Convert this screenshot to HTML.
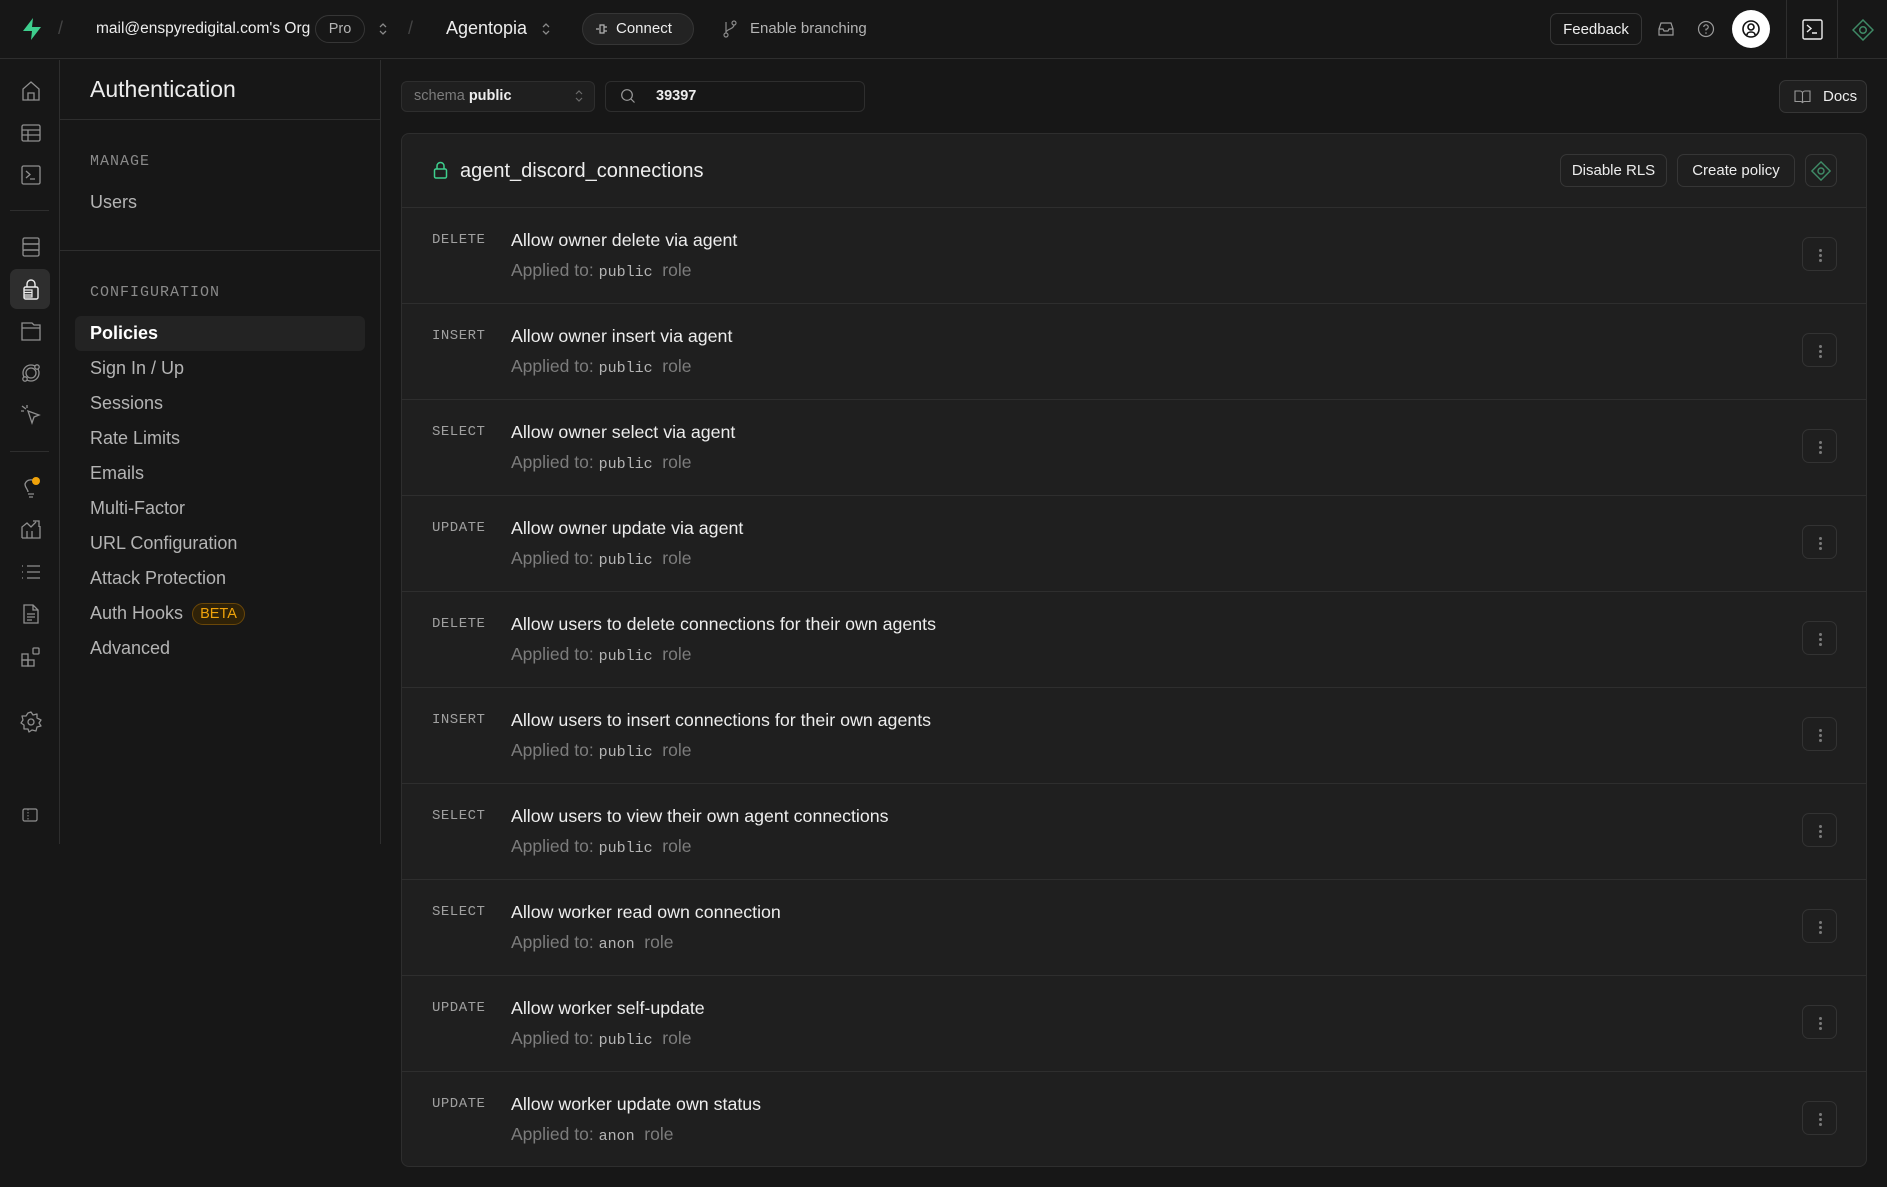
<!DOCTYPE html>
<html><head><meta charset="utf-8"><style>
*{margin:0;padding:0;box-sizing:border-box}
body{width:1887px;height:1187px;background:#171717;font-family:"Liberation Sans",sans-serif;color:#ededed;position:relative;overflow:hidden}
.a{position:absolute}
.mono{font-family:"Liberation Mono",monospace}
.btn{position:absolute;border:1px solid #363636;border-radius:7px;background:#1f1f1f;color:#ededed;font-size:15px;display:flex;align-items:center;justify-content:center}
svg{display:block}
.ic{position:absolute;left:19px;width:24px;height:24px}
.nav{position:absolute;left:90px;font-size:18px;color:#b4b4b4;line-height:20px}
.row{position:absolute;left:401px;width:1466px;height:96px;border-top:1px solid #2e2e2e}
.row .m{position:absolute;left:31px;top:24px;font-size:14px;color:#a0a0a0;font-family:"Liberation Mono",monospace;letter-spacing:0.5px}
.row .t{position:absolute;left:110px;top:22px;font-size:17.8px;color:#ededed}
.row .s{position:absolute;left:110px;top:52px;font-size:17.5px;color:#7c7c7c}
.row .s span{font-family:"Liberation Mono",monospace;font-size:15px;color:#b4b4b4}
.row .k{position:absolute;left:1401px;top:29px;width:35px;height:34px;border:1px solid #333;border-radius:7px;background:#1f1f1f}
.row .k i{position:absolute;left:15.5px;width:3px;height:3px;border-radius:2px;background:#7a7a7a}
</style></head><body>
<div class="a" style="left:0;top:0;width:1887px;height:59px;border-bottom:1px solid #2e2e2e;background:#171717"></div>
<svg class="a" style="left:20px;top:17px" width="24" height="24" viewBox="0 0 24 24"><path d="M13 1 L3 14 H12 L11 23 L21 10 H12 Z" fill="#3ecf8e"/></svg>
<div class="a" style="left:58px;top:18px;color:#444;font-size:18px">/</div>
<div class="a" style="left:96px;top:20px;font-size:15.5px;color:#ededed">mail@enspyredigital.com's Org</div>
<div class="a" style="left:315px;top:15px;width:50px;height:28px;border:1px solid #363636;border-radius:14px;font-size:14.5px;color:#b4b4b4;text-align:center;line-height:26px">Pro</div>
<svg class="a" style="left:377px;top:21px" width="12" height="16" viewBox="0 0 12 16"><path d="M3 6 L6 3 L9 6 M3 10 L6 13 L9 10" stroke="#8a8a8a" stroke-width="1.3" fill="none"/></svg>
<div class="a" style="left:408px;top:18px;color:#444;font-size:18px">/</div>
<div class="a" style="left:446px;top:18px;font-size:18px;color:#ededed">Agentopia</div>
<svg class="a" style="left:540px;top:21px" width="12" height="16" viewBox="0 0 12 16"><path d="M3 6 L6 3 L9 6 M3 10 L6 13 L9 10" stroke="#8a8a8a" stroke-width="1.3" fill="none"/></svg>
<div class="a" style="left:582px;top:13px;width:112px;height:32px;border:1px solid #363636;border-radius:16px;background:#232323"></div>
<svg class="a" style="left:595px;top:22px" width="16" height="14" viewBox="0 0 16 14"><path d="M1 7 H4 M5 3 H9 V11 H5 Z M9 5 H12 M9 9 H12" stroke="#b4b4b4" stroke-width="1.2" fill="none"/></svg>
<div class="a" style="left:616px;top:20px;font-size:15px;color:#ededed">Connect</div>
<svg class="a" style="left:722px;top:19px" width="16" height="20" viewBox="0 0 16 20"><circle cx="4" cy="16" r="2" stroke="#8a8a8a" fill="none" stroke-width="1.2"/><circle cx="12" cy="4" r="2" stroke="#8a8a8a" fill="none" stroke-width="1.2"/><path d="M4 14 V3 M12 6 C12 10 5 10 4 13" stroke="#8a8a8a" fill="none" stroke-width="1.2"/></svg>
<div class="a" style="left:750px;top:20px;font-size:15px;color:#b4b4b4">Enable branching</div>
<div class="btn" style="left:1550px;top:13px;width:92px;height:32px;background:#171717">Feedback</div>
<svg class="a" style="left:1657px;top:20px" width="18" height="18" viewBox="0 0 18 18"><path d="M2 9 L4 3 H14 L16 9 V15 H2 Z M2 9 H6 L7 11 H11 L12 9 H16" stroke="#9a9a9a" stroke-width="1.2" fill="none"/></svg>
<svg class="a" style="left:1697px;top:20px" width="18" height="18" viewBox="0 0 18 18"><circle cx="9" cy="9" r="7.5" stroke="#9a9a9a" stroke-width="1.2" fill="none"/><path d="M6.8 7 A2.2 2.2 0 1 1 9 9.2 V10.5" stroke="#9a9a9a" stroke-width="1.2" fill="none"/><circle cx="9" cy="13" r=".8" fill="#9a9a9a"/></svg>
<div class="a" style="left:1732px;top:10px;width:38px;height:38px;border-radius:19px;background:#fff"></div>
<svg class="a" style="left:1740px;top:18px" width="22" height="22" viewBox="0 0 22 22"><circle cx="11" cy="11" r="8" stroke="#111" stroke-width="1.6" fill="none"/><circle cx="11" cy="9" r="3" stroke="#111" stroke-width="1.6" fill="none"/><path d="M7 17 C7 13 15 13 15 17" stroke="#111" stroke-width="1.6" fill="none"/></svg>
<div class="a" style="left:1786px;top:0;width:1px;height:59px;background:#2e2e2e"></div>
<svg class="a" style="left:1802px;top:19px" width="21" height="21" viewBox="0 0 21 21"><rect x="1" y="1" width="19" height="19" rx="1.5" stroke="#ededed" stroke-width="1.4" fill="none"/><path d="M5 6 L9 9.5 L5 13 M10 14 H15" stroke="#ededed" stroke-width="1.4" fill="none"/></svg>
<div class="a" style="left:1837px;top:0;width:1px;height:59px;background:#2e2e2e"></div>
<svg class="a" style="left:1852px;top:19px" width="22" height="22" viewBox="0 0 22 22"><path d="M11 1 L21 11 L11 21 L1 11 Z" stroke="#3f8a66" stroke-width="1.5" fill="none"/><circle cx="11" cy="11" r="3.3" stroke="#3f8a66" stroke-width="1.5" fill="none"/></svg>

<div class="a" style="left:59px;top:60px;width:1px;height:784px;background:#2e2e2e"></div>
<div class="a" style="left:10px;top:269px;width:40px;height:40px;border-radius:7px;background:#2e2e2e"></div>
<div class="a" style="left:10px;top:210px;width:39px;height:1px;background:#2e2e2e"></div>
<div class="a" style="left:10px;top:451px;width:39px;height:1px;background:#2e2e2e"></div>
<svg class="ic" style="top:79px" viewBox="0 0 24 24"><path d="M4 21 V10 L12 3 L20 10 V21 Z M9 21 V14 H15 V21" stroke="#8f8f8f" stroke-width="1.3" fill="none"/></svg>
<svg class="ic" style="top:121px" viewBox="0 0 24 24"><rect x="3" y="4" width="18" height="16" rx="1.5" stroke="#8f8f8f" stroke-width="1.3" fill="none"/><path d="M3 9 H21 M3 14 H21 M9 9 V20" stroke="#8f8f8f" stroke-width="1.3"/></svg>
<svg class="ic" style="top:163px" viewBox="0 0 24 24"><rect x="3" y="3" width="18" height="18" rx="1.5" stroke="#8f8f8f" stroke-width="1.3" fill="none"/><path d="M7 8 L11 11.5 L7 15 M11 16 H16" stroke="#8f8f8f" stroke-width="1.3" fill="none"/></svg>
<svg class="ic" style="top:235px" viewBox="0 0 24 24"><rect x="4" y="3" width="16" height="6" rx="1.5" stroke="#8f8f8f" stroke-width="1.3" fill="none"/><rect x="4" y="9" width="16" height="6" stroke="#8f8f8f" stroke-width="1.3" fill="none"/><rect x="4" y="15" width="16" height="6" rx="1.5" stroke="#8f8f8f" stroke-width="1.3" fill="none"/></svg>
<svg class="ic" style="top:277px" viewBox="0 0 24 24"><path d="M8 10 V7 A4 4 0 0 1 16 7 V10" stroke="#ededed" stroke-width="1.4" fill="none"/><rect x="5" y="10" width="14" height="12" rx="1.5" stroke="#ededed" stroke-width="1.4" fill="none"/><path d="M5 13 H13 V20 H5 M5 15.5 H13 M5 18 H13" stroke="#ededed" stroke-width="1.2" fill="none"/></svg>
<svg class="ic" style="top:319px" viewBox="0 0 24 24"><path d="M3 21 V9 H21 V21 Z M3 9 V4 H13 L15 6 H21 V9" stroke="#8f8f8f" stroke-width="1.3" fill="none"/></svg>
<svg class="ic" style="top:361px" viewBox="0 0 24 24"><circle cx="12" cy="12" r="8" stroke="#8f8f8f" stroke-width="1.3" fill="none"/><circle cx="12" cy="12" r="5" stroke="#8f8f8f" stroke-width="1.3" fill="none"/><circle cx="18" cy="6" r="2.2" stroke="#8f8f8f" stroke-width="1.3" fill="#171717"/><circle cx="6" cy="18" r="2.2" stroke="#8f8f8f" stroke-width="1.3" fill="#171717"/></svg>
<svg class="ic" style="top:403px" viewBox="0 0 24 24"><path d="M9 8 L20 12 L15 14 L13 20 Z M3 3 L7 6 M8 2 V5 M2 8 H5" stroke="#8f8f8f" stroke-width="1.3" fill="none"/></svg>
<svg class="ic" style="top:475px" viewBox="0 0 24 24"><path d="M9 17 C9 14 6 13 6 9 A6 6 0 0 1 17 8 M9 19 H15 M10 22 H14" stroke="#8f8f8f" stroke-width="1.3" fill="none"/><circle cx="17" cy="6" r="4" fill="#f0a30a"/></svg>
<svg class="ic" style="top:517px" viewBox="0 0 24 24"><path d="M3 21 V10 L8 6 L12 10 L17 5 M14 4 H20 V10 M3 21 H21 V9 M8 21 V14 M13 21 V14" stroke="#8f8f8f" stroke-width="1.3" fill="none"/></svg>
<svg class="ic" style="top:560px" viewBox="0 0 24 24"><path d="M8 6 H21 M8 12 H21 M8 18 H21 M3 6 H4 M3 12 H4 M3 18 H4" stroke="#8f8f8f" stroke-width="1.3"/></svg>
<svg class="ic" style="top:602px" viewBox="0 0 24 24"><path d="M5 3 H14 L19 8 V21 H5 Z M14 3 V8 H19 M8 12 H16 M8 15 H16 M8 18 H13" stroke="#8f8f8f" stroke-width="1.3" fill="none"/></svg>
<svg class="ic" style="top:645px" viewBox="0 0 24 24"><rect x="3" y="9" width="6" height="6" stroke="#8f8f8f" stroke-width="1.3" fill="none"/><rect x="3" y="15" width="6" height="6" stroke="#8f8f8f" stroke-width="1.3" fill="none"/><rect x="9" y="15" width="6" height="6" stroke="#8f8f8f" stroke-width="1.3" fill="none"/><rect x="14" y="3" width="6" height="6" rx="1" stroke="#8f8f8f" stroke-width="1.3" fill="none"/></svg>
<svg class="ic" style="top:710px" viewBox="0 0 24 24"><circle cx="12" cy="12" r="3" stroke="#8f8f8f" stroke-width="1.3" fill="none"/><path d="M12 2 L14 5 L18 4 L18 8 L22 10 L20 13 L22 16 L18 17 L17 21 L13 20 L10 22 L9 19 L5 19 L5 15 L2 13 L4 10 L3 6 L7 6 L9 3 Z" stroke="#8f8f8f" stroke-width="1.3" fill="none" stroke-linejoin="round"/></svg>
<svg class="ic" style="top:807px;left:22px;width:16px;height:16px" viewBox="0 0 16 16"><rect x="1" y="2" width="14" height="12" rx="1.5" stroke="#8f8f8f" stroke-width="1.2" fill="none"/><path d="M6 2 V14" stroke="#8f8f8f" stroke-width="1" stroke-dasharray="1.5 1.5"/></svg>

<div class="a" style="left:380px;top:60px;width:1px;height:784px;background:#2e2e2e"></div>
<div class="a" style="left:60px;top:119px;width:320px;height:1px;background:#2e2e2e"></div>
<div class="a" style="left:60px;top:250px;width:320px;height:1px;background:#2e2e2e"></div>
<div class="a" style="left:90px;top:76px;font-size:23px;color:#ededed">Authentication</div>
<div class="a mono" style="left:90px;top:153px;font-size:15px;color:#8a8a8a;letter-spacing:1px">MANAGE</div>
<div class="nav" style="top:192px">Users</div>
<div class="a mono" style="left:90px;top:284px;font-size:15px;color:#8a8a8a;letter-spacing:1px">CONFIGURATION</div>
<div class="a" style="left:75px;top:316px;width:290px;height:35px;border-radius:6px;background:#232323"></div>
<div class="nav" style="top:323px;color:#fff;font-weight:bold">Policies</div>
<div class="nav" style="top:358px">Sign In / Up</div>
<div class="nav" style="top:393px">Sessions</div>
<div class="nav" style="top:428px">Rate Limits</div>
<div class="nav" style="top:463px">Emails</div>
<div class="nav" style="top:498px">Multi-Factor</div>
<div class="nav" style="top:533px">URL Configuration</div>
<div class="nav" style="top:568px">Attack Protection</div>
<div class="nav" style="top:603px">Auth Hooks</div>
<div class="a" style="left:192px;top:603px;width:53px;height:22px;border:1px solid #6a4708;border-radius:11px;background:#2f2208;color:#f0a30a;font-size:14.5px;text-align:center;line-height:20px">BETA</div>
<div class="nav" style="top:638px">Advanced</div>

<div class="a" style="left:401px;top:81px;width:194px;height:31px;border:1px solid #2e2e2e;border-radius:6px;background:#1f1f1f"></div>
<div class="a" style="left:414px;top:88px;font-size:14.5px;color:#7c7c7c">schema <b style="color:#ededed">public</b></div>
<svg class="a" style="left:573px;top:88px" width="12" height="16" viewBox="0 0 12 16"><path d="M3 6 L6 3 L9 6 M3 10 L6 13 L9 10" stroke="#6a6a6a" stroke-width="1.2" fill="none"/></svg>
<div class="a" style="left:605px;top:81px;width:260px;height:31px;border:1px solid #2e2e2e;border-radius:6px;background:#171717"></div>
<svg class="a" style="left:620px;top:88px" width="16" height="16" viewBox="0 0 16 16"><circle cx="7" cy="7" r="5.3" stroke="#9a9a9a" stroke-width="1.2" fill="none"/><path d="M11 11 L14.5 14.5" stroke="#9a9a9a" stroke-width="1.2"/></svg>
<div class="a" style="left:656px;top:88px;font-size:14.5px;font-weight:bold;color:#ededed">39397</div>
<div class="btn" style="left:1779px;top:80px;width:88px;height:33px;background:#1f1f1f;justify-content:flex-start;padding-left:14px"><svg width="17" height="15" viewBox="0 0 17 15" style="margin-right:12px"><path d="M1 2 H6 A2.5 2.5 0 0 1 8.5 4.5 V14 A2 2 0 0 0 6.5 12.5 H1 Z M16 2 H11 A2.5 2.5 0 0 0 8.5 4.5 V14 A2 2 0 0 1 10.5 12.5 H16 Z" stroke="#9a9a9a" stroke-width="1.1" fill="none"/></svg>Docs</div>

<div class="a" style="left:401px;top:133px;width:1466px;height:1034px;border:1px solid #2e2e2e;border-radius:8px;background:#1f1f1f"></div>
<svg class="a" style="left:433px;top:161px" width="15" height="18" viewBox="0 0 15 18"><path d="M4 8 V5 A3.5 3.5 0 0 1 11 5 V8" stroke="#3ecf8e" stroke-width="1.5" fill="none"/><rect x="1.5" y="8" width="12" height="9" rx="1.5" stroke="#3ecf8e" stroke-width="1.5" fill="none"/></svg>
<div class="a" style="left:460px;top:160px;font-size:20px;color:#ededed">agent_discord_connections</div>
<div class="btn" style="left:1560px;top:154px;width:107px;height:33px">Disable RLS</div>
<div class="btn" style="left:1677px;top:154px;width:118px;height:33px">Create policy</div>
<div class="btn" style="left:1805px;top:154px;width:32px;height:33px"><svg width="20" height="20" viewBox="0 0 22 22"><path d="M11 1 L21 11 L11 21 L1 11 Z" stroke="#3f8a66" stroke-width="1.6" fill="none"/><circle cx="11" cy="11" r="3.3" stroke="#3f8a66" stroke-width="1.6" fill="none"/></svg></div>

<div class="row" style="top:207px"><div class="m">DELETE</div><div class="t">Allow owner delete via agent</div><div class="s">Applied to: <span>public</span>&nbsp; role</div><div class="k"><i style="top:11px"></i><i style="top:16px"></i><i style="top:21px"></i></div></div>
<div class="row" style="top:303px"><div class="m">INSERT</div><div class="t">Allow owner insert via agent</div><div class="s">Applied to: <span>public</span>&nbsp; role</div><div class="k"><i style="top:11px"></i><i style="top:16px"></i><i style="top:21px"></i></div></div>
<div class="row" style="top:399px"><div class="m">SELECT</div><div class="t">Allow owner select via agent</div><div class="s">Applied to: <span>public</span>&nbsp; role</div><div class="k"><i style="top:11px"></i><i style="top:16px"></i><i style="top:21px"></i></div></div>
<div class="row" style="top:495px"><div class="m">UPDATE</div><div class="t">Allow owner update via agent</div><div class="s">Applied to: <span>public</span>&nbsp; role</div><div class="k"><i style="top:11px"></i><i style="top:16px"></i><i style="top:21px"></i></div></div>
<div class="row" style="top:591px"><div class="m">DELETE</div><div class="t">Allow users to delete connections for their own agents</div><div class="s">Applied to: <span>public</span>&nbsp; role</div><div class="k"><i style="top:11px"></i><i style="top:16px"></i><i style="top:21px"></i></div></div>
<div class="row" style="top:687px"><div class="m">INSERT</div><div class="t">Allow users to insert connections for their own agents</div><div class="s">Applied to: <span>public</span>&nbsp; role</div><div class="k"><i style="top:11px"></i><i style="top:16px"></i><i style="top:21px"></i></div></div>
<div class="row" style="top:783px"><div class="m">SELECT</div><div class="t">Allow users to view their own agent connections</div><div class="s">Applied to: <span>public</span>&nbsp; role</div><div class="k"><i style="top:11px"></i><i style="top:16px"></i><i style="top:21px"></i></div></div>
<div class="row" style="top:879px"><div class="m">SELECT</div><div class="t">Allow worker read own connection</div><div class="s">Applied to: <span>anon</span>&nbsp; role</div><div class="k"><i style="top:11px"></i><i style="top:16px"></i><i style="top:21px"></i></div></div>
<div class="row" style="top:975px"><div class="m">UPDATE</div><div class="t">Allow worker self-update</div><div class="s">Applied to: <span>public</span>&nbsp; role</div><div class="k"><i style="top:11px"></i><i style="top:16px"></i><i style="top:21px"></i></div></div>
<div class="row" style="top:1071px"><div class="m">UPDATE</div><div class="t">Allow worker update own status</div><div class="s">Applied to: <span>anon</span>&nbsp; role</div><div class="k"><i style="top:11px"></i><i style="top:16px"></i><i style="top:21px"></i></div></div>
</body></html>
